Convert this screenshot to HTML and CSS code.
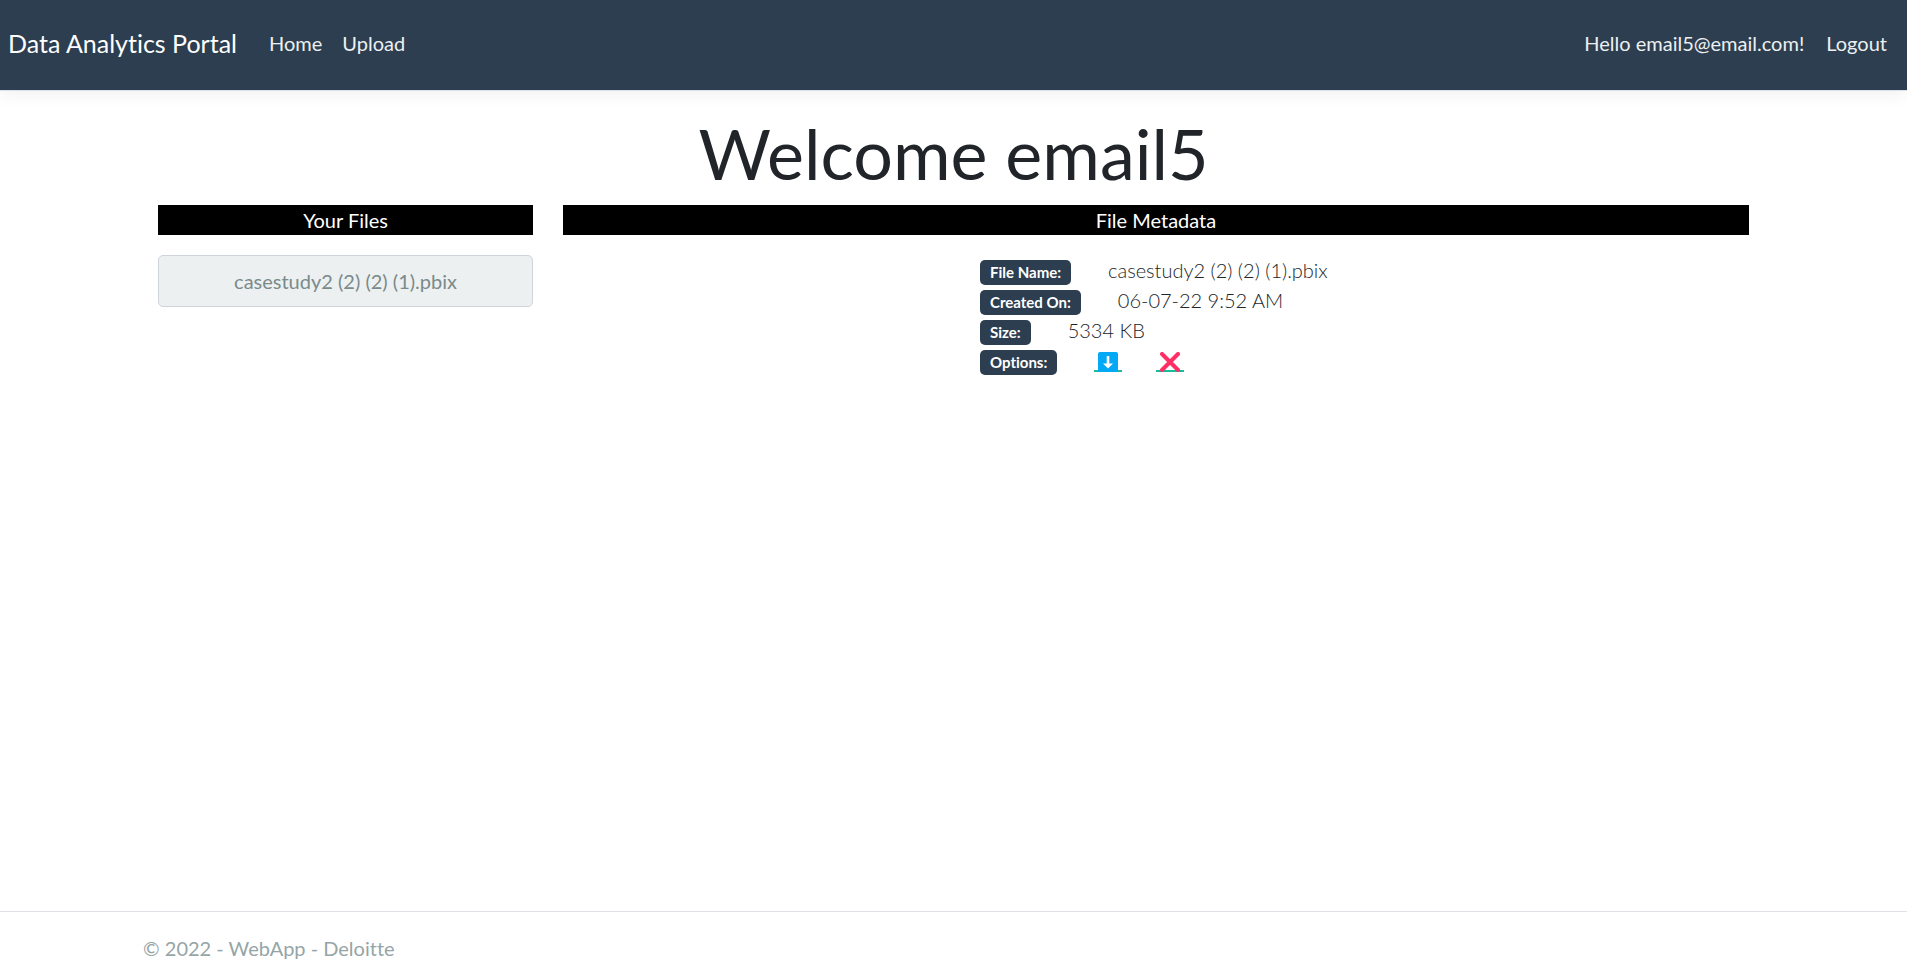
FILE: index.html
```html
<!DOCTYPE html>
<html lang="en">
<head>
<meta charset="utf-8">
<meta name="viewport" content="width=device-width, initial-scale=1">
<title>Data Analytics Portal</title>
<link rel="stylesheet" href="styles.css">
</head>
<body>
<header class="navbar">
  <a class="brand" href="#">Data Analytics Portal</a>
  <nav class="nav-main">
    <a class="nav-link" href="#">Home</a>
    <a class="nav-link" href="#">Upload</a>
  </nav>
  <div class="nav-account">
    <a class="nav-user" href="#">Hello email5@email.com!</a>
    <button class="nav-logout" type="button">Logout</button>
  </div>
</header>
<main class="container">
  <h1 class="title">Welcome email5</h1>
  <div class="columns">
    <section class="files">
      <h2 class="bar">Your Files</h2>
      <button class="file-button" type="button">casestudy2 (2) (2) (1).pbix</button>
    </section>
    <section class="metadata">
      <h2 class="bar">File Metadata</h2>
      <dl class="details">
        <div class="detail"><dt class="badge">File Name:</dt><dd class="value">casestudy2 (2) (2) (1).pbix</dd></div>
        <div class="detail"><dt class="badge">Created On:</dt><dd class="value">06-07-22 9:52 AM</dd></div>
        <div class="detail"><dt class="badge">Size:</dt><dd class="value">5334 KB</dd></div>
        <div class="detail"><dt class="badge">Options:</dt>
          <dd class="options">
            <a class="option" href="#" aria-label="Download">
              <svg width="20" height="20" viewBox="0 0 20 20"><rect width="20" height="20" rx="2" fill="#03a9f4"/><path d="M8.700 4h2.600v7.500H15l-5 5-5-5h3.700z" fill="#fff"/></svg>
            </a>
            <a class="option" href="#" aria-label="Delete">
              <svg width="20" height="20" viewBox="0 0 20 20"><path d="M2 2l16 16M18 2L2 18" fill="none" stroke="#ff2e63" stroke-width="4" stroke-linecap="round"/></svg>
            </a>
          </dd>
        </div>
      </dl>
    </section>
  </div>
</main>
<footer class="footer">
  <div class="footer-text">© 2022 - WebApp - Deloitte</div>
</footer>
</body>
</html>
```
FILE: styles.css
```css
* { box-sizing: border-box; }
body {
  margin: 0;
  min-height: 100vh;
  display: flex;
  flex-direction: column;
  font: 400 20px/30px Lato, sans-serif;
  font-variant-ligatures: none;
  color: #212529;
  background: #fff;
}
a { text-decoration: none; }
button { font: inherit; font-variant-ligatures: none; cursor: pointer; }
.navbar {
  display: flex;
  align-items: center;
  min-height: 91px;
  padding: 0 20px 4px 8px;
  background: #2c3e50;
  border-bottom: 1px solid #dee2e6;
  box-shadow: 0 5px 15px rgba(0, 0, 0, 0.05);
}
.brand { font-size: 25px; color: #fff; margin-right: 32px; }
.nav-main { display: flex; gap: 20px; }
.nav-link, .nav-user, .nav-logout { color: #ecf0f1; }
.nav-account { display: flex; align-items: center; gap: 22px; margin-left: auto; }
.nav-logout { padding: 0; border: 0; background: none; }
.container { width: 85%; margin: 0 auto; padding: 0 15px; flex: 1; }
.title {
  margin: 20px 0 10px;
  font-size: 70px;
  line-height: 84px;
  font-weight: 400;
  text-align: center;
}
.columns { display: grid; grid-template-columns: minmax(0, 375fr) minmax(0, 1186fr); gap: 30px; }
.bar {
  margin: 0;
  font-size: 20px;
  line-height: 30px;
  font-weight: 400;
  text-align: center;
  color: #fff;
  background: #000;
}
.file-button {
  width: 100%;
  min-height: 52px;
  margin-top: 20px;
  padding: 8px 20px;
  border: 1px solid #ced4da;
  border-radius: 5px;
  background: #ecf0f1;
  color: #7b8a8b;
}
.details { display: grid; grid-template-columns: 417fr 769fr; margin: 22px 0 0; }
.detail { grid-column: 2; display: flex; align-items: center; gap: 37px; min-height: 30px; }
.badge {
  padding: 5px 10px;
  border-radius: 5px;
  background: #2c3e50;
  color: #fff;
  font-size: 15px;
  line-height: 15px;
  font-weight: 700;
}
.value { margin: 0; padding-bottom: 4px; line-height: 26px; font-weight: 300; }
.options { display: flex; gap: 34px; margin: 0; }
.option { display: block; padding: 0 4px; line-height: 0; background: linear-gradient(#18bc9c, #18bc9c) bottom / 100% 2px no-repeat; }
.footer { padding: 21px 0 14px; border-top: 1px solid #dee2e6; color: #95a5a6; }
.footer-text { width: 85%; margin: 0 auto; }
```
